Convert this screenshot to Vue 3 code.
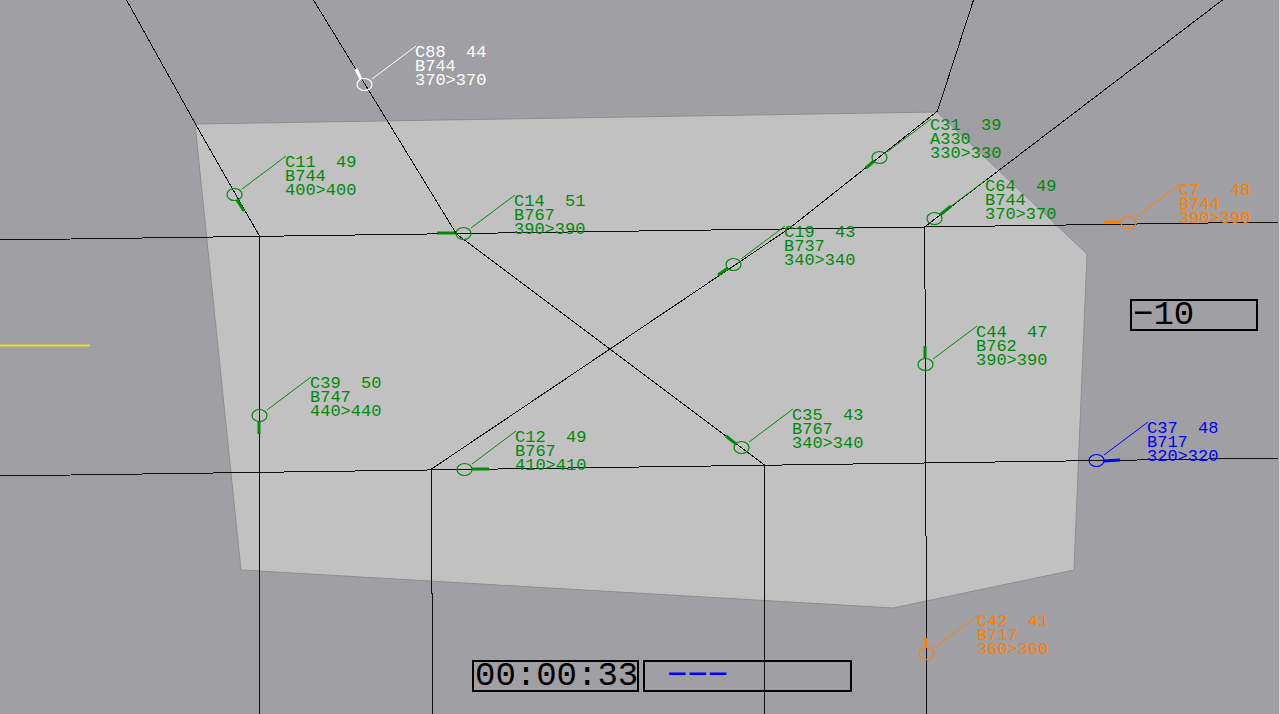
<script setup>
const sector = '195,124 937,112 1087,254 1074,570 893,608 241,570'

const routes = [
  '126,0 195,124 259,236 259,714',
  '313,0 456,234 764,465 764,714',
  '973,0 937,111 788,229 431,469 432,714',
  '1222,0 924,227 925,350 926,714',
  '0,240 1279,222',
  '0,476 1279,458',
]

// v gives the speed vector's start and end, relative to the symbol's centre
const aircraft = [
  { id: 'C88  44', type: 'B744', level: '370>370', tone: 'white', x: 364, y: 84, v: [-3, -5, -8, -15] },
  { id: 'C11  49', type: 'B744', level: '400>400', tone: 'green', x: 234, y: 194, v: [3, 6, 10, 17] },
  { id: 'C14  51', type: 'B767', level: '390>390', tone: 'green', x: 463, y: 233, v: [-8, 0, -26, 0] },
  { id: 'C31  39', type: 'A330', level: '330>330', tone: 'green', x: 879, y: 157, v: [-5, 4, -13, 11] },
  { id: 'C19  43', type: 'B737', level: '340>340', tone: 'green', x: 733, y: 264, v: [-5, 4, -15, 11] },
  { id: 'C64  49', type: 'B744', level: '370>370', tone: 'green', x: 934, y: 218, v: [6, -3, 17, -12] },
  { id: 'C7   48', type: 'B744', level: '390>390', tone: 'orange', x: 1128, y: 222, v: [-8, 0, -24, 0] },
  { id: 'C44  47', type: 'B762', level: '390>390', tone: 'green', x: 925, y: 364, v: [0, -6, 0, -18] },
  { id: 'C37  48', type: 'B717', level: '320>320', tone: 'blue', x: 1096, y: 460, v: [8, 1, 24, 0] },
  { id: 'C39  50', type: 'B747', level: '440>440', tone: 'green', x: 259, y: 415, v: [0, 6, 0, 19] },
  { id: 'C12  49', type: 'B767', level: '410>410', tone: 'green', x: 464, y: 469, v: [8, 0, 25, 0] },
  { id: 'C35  43', type: 'B767', level: '340>340', tone: 'green', x: 741, y: 447, v: [-5, -3, -15, -11] },
  { id: 'C42  41', type: 'B717', level: '360>360', tone: 'orange', x: 926, y: 653, v: [0, -6, 0, -15] },
]
</script>

<template>
  <main class="radar">
    <svg class="scope" viewBox="0 0 1280 714" role="img" aria-label="Air traffic sector">
      <rect class="ground" width="1279" height="714" />
      <polygon class="sector" :points="sector" />
      <path class="scale" d="M0 345.5H90" />
      <polyline v-for="r in routes" :key="r" class="route" :points="r" transform="translate(.5 0)" />
      <g v-for="a in aircraft" :key="a.id" :class="['plane', a.tone]" :transform="`translate(${a.x} ${a.y})`">
        <path class="leader" d="M8 -5L52 -38" />
        <ellipse class="symbol" cx=".5" cy=".5" rx="7.5" ry="6" />
        <line class="vector" :x1="a.v[0]" :y1="a.v[1]" :x2="a.v[2]" :y2="a.v[3]" />
        <text class="tag" y="-27"><tspan x="51">{{ a.id }}</tspan><tspan x="51" dy="14">{{ a.type }}</tspan><tspan x="51" dy="14">{{ a.level }}</tspan></text>
      </g>
    </svg>
    <output class="readout offset" aria-label="Score">−10</output>
    <div class="panel">
      <time class="readout clock">00:00:33</time>
      <output class="readout message" aria-label="Selection">−−−</output>
    </div>
  </main>
</template>

<style>
body {
  background: #dcdcdc;
}
</style>

<style scoped>
.radar {
  position: relative;
  overflow: hidden;
  font-family: "Liberation Mono", "Courier New", monospace;
}
.scope {
  display: block;
  width: 100%;
}
.ground {
  fill: #a09fa4;
}
.sector {
  fill: #c1c1c1;
  stroke: #8e8e8e;
  stroke-width: 1;
}
.scale {
  stroke: #e2e22c;
  stroke-width: 2;
}
.route {
  fill: none;
  stroke: #101010;
  stroke-width: 1;
  shape-rendering: crispEdges;
}
.plane {
  color: #008a0c;
}
.plane.white {
  color: #ffffff;
}
.plane.orange {
  color: #ff8000;
}
.plane.blue {
  color: #0000ff;
}
.leader,
.symbol,
.vector {
  fill: none;
  stroke: currentColor;
}
.symbol {
  stroke-width: 1.2;
}
.vector {
  stroke-width: 3;
}
.tag {
  fill: currentColor;
  font-size: 17px;
  white-space: pre;
}
.readout {
  display: block;
  box-sizing: border-box;
  height: 32px;
  border: 2px solid #000;
  padding: 0 1px;
  color: #000;
  font-size: 34px;
  line-height: 28px;
  white-space: pre;
}
.offset {
  position: absolute;
  top: 299px;
  right: 22px;
  width: 10%;
}
.panel {
  position: absolute;
  left: 472px;
  bottom: 22px;
  width: 380px;
  display: flex;
  gap: 4px;
}
.clock {
  flex: none;
  width: 167px;
  padding: 0 1px;
}
.message {
  flex: 1;
  padding: 0 22px;
  color: #0000ff;
}
</style>
